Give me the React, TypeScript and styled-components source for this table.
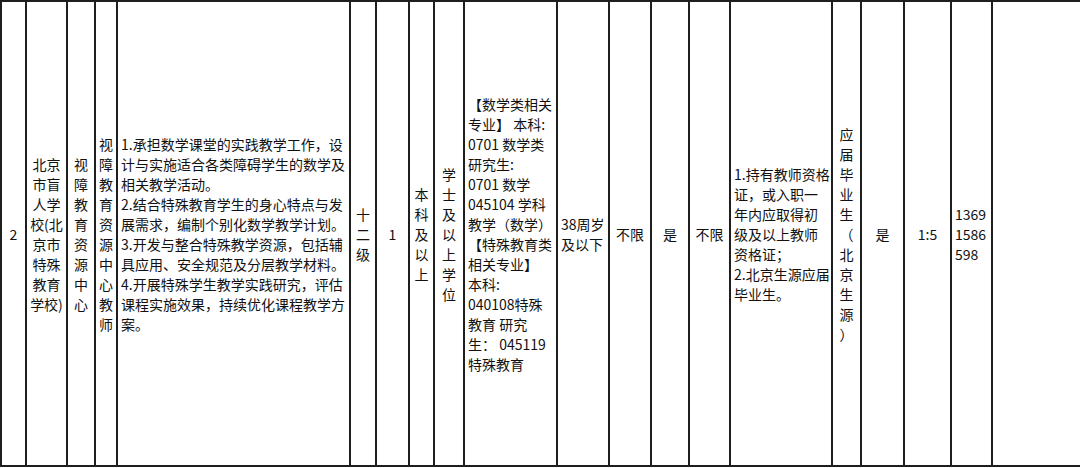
import React from "react";
import styled, { createGlobalStyle } from "styled-components";

const GlobalStyle = createGlobalStyle`
  html, body {
    margin: 0;
    padding: 0;
    background: #ffffff;
  }
  body {
    font-family: "Noto Sans CJK SC", "Noto Sans", sans-serif;
    color: #111111;
  }
`;

const Row = styled.div`
  box-sizing: border-box;
  width: 1080px;
  height: 467px;
  display: grid;
  grid-template-columns: 25px 41px 28px 22px 233px 26px 33px 25px 30px 93px 52px 42px 38px 41px 102px 29px 43px 47px 41px 1fr;
  border-top: 2px solid #1e1e1e;
  border-bottom: 2px solid #1e1e1e;
  background: #ffffff;
`;

const Cell = styled.div<{ $align?: "center" | "left"; $noBorder?: boolean }>`
  box-sizing: border-box;
  border-left: ${(p) => (p.$noBorder ? "none" : "2px solid #1e1e1e")};
  display: flex;
  flex-direction: column;
  justify-content: center;
  align-items: ${(p) => (p.$align === "left" ? "flex-start" : "center")};
  padding: 0 1px 0 ${(p) => (p.$align === "left" ? "3px" : "1px")};
  font-size: 14px;
  line-height: 20px;
  text-align: ${(p) => (p.$align === "left" ? "left" : "center")};
  overflow: visible;
`;

const Line = styled.span`
  display: block;
  white-space: nowrap;
`;

type Col = { lines: string[]; align?: "center" | "left" };

const cols: Col[] = [
  { lines: ["2"] },
  { lines: ["北京", "市盲", "人学", "校(北", "京市", "特殊", "教育", "学校)"] },
  { lines: ["视", "障", "教", "育", "资", "源", "中", "心"] },
  { lines: ["视", "障", "教", "育", "资", "源", "中", "心", "教", "师"] },
  {
    align: "left",
    lines: [
      "1.承担数学课堂的实践教学工作，设",
      "计与实施适合各类障碍学生的数学及",
      "相关教学活动。",
      "2.结合特殊教育学生的身心特点与发",
      "展需求，编制个别化数学教学计划。",
      "3.开发与整合特殊教学资源，包括辅",
      "具应用、安全规范及分层教学材料。",
      "4.开展特殊学生教学实践研究，评估",
      "课程实施效果，持续优化课程教学方",
      "案。",
    ],
  },
  { lines: ["十", "二", "级"] },
  { lines: ["1"] },
  { lines: ["本", "科", "及", "以", "上"] },
  { lines: ["学", "士", "及", "以", "上", "学", "位"] },
  {
    align: "left",
    lines: [
      "【数学类相关",
      "专业】 本科:",
      "0701 数学类",
      "研究生:",
      "0701 数学",
      "045104 学科",
      "教学（数学）",
      "【特殊教育类",
      "相关专业】",
      "本科:",
      "040108特殊",
      "教育 研究",
      "生： 045119",
      "特殊教育",
    ],
  },
  { align: "left", lines: ["38周岁", "及以下"] },
  { lines: ["不限"] },
  { lines: ["是"] },
  { lines: ["不限"] },
  {
    align: "left",
    lines: [
      "1.持有教师资格",
      "证，或入职一",
      "年内应取得初",
      "级及以上教师",
      "资格证；",
      "2.北京生源应届",
      "毕业生。",
    ],
  },
  { lines: ["应", "届", "毕", "业", "生", "（", "北", "京", "生", "源", "）"] },
  { lines: ["是"] },
  { lines: ["1:5"] },
  { align: "left", lines: ["1369", "1586", "598"] },
  { lines: [] },
];

export default function App() {
  return (
    <>
      <GlobalStyle />
      <Row>
        {cols.map((c, i) => (
          <Cell key={i} $align={c.align} $noBorder={false}>
            {c.lines.map((l, j) => (
              <Line key={j}>{l}</Line>
            ))}
          </Cell>
        ))}
      </Row>
    </>
  );
}
